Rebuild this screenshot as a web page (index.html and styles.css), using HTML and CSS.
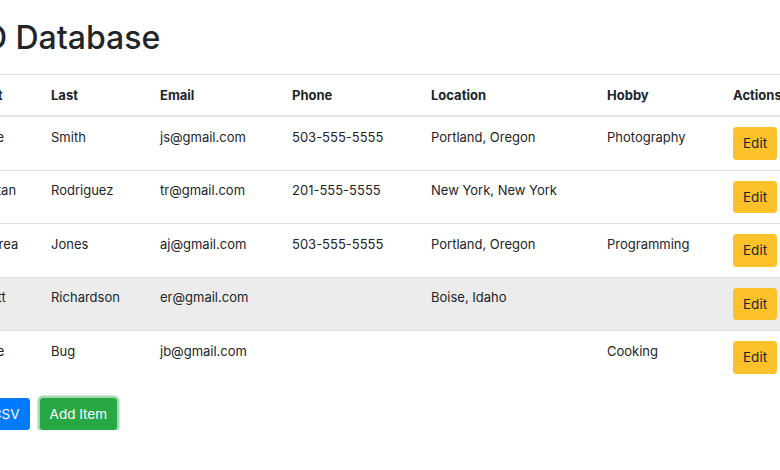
FILE: index.html
```html
<!DOCTYPE html>
<html lang="en">
<head>
  <meta charset="UTF-8" />
  <meta name="viewport" content="width=device-width, initial-scale=1.0"/>
  <title>CRUD Database</title>
  <link rel="stylesheet" href="styles.css">
</head>
<body>
  <div class="container">
    <h1>CRUD Database</h1>

    <table class="table">
      <colgroup>
        <col class="c-first">
        <col class="c-last">
        <col class="c-email">
        <col class="c-phone">
        <col class="c-location">
        <col class="c-hobby">
        <col class="c-actions">
      </colgroup>
      <thead>
        <tr>
          <th>First</th>
          <th>Last</th>
          <th>Email</th>
          <th>Phone</th>
          <th>Location</th>
          <th>Hobby</th>
          <th>Actions</th>
        </tr>
      </thead>
      <tbody>
        <tr>
          <td>Jane</td>
          <td>Smith</td>
          <td>js@gmail.com</td>
          <td>503-555-5555</td>
          <td>Portland, Oregon</td>
          <td>Photography</td>
          <td><button class="btn btn-warning">Edit</button></td>
        </tr>
        <tr>
          <td>Tristan</td>
          <td>Rodriguez</td>
          <td>tr@gmail.com</td>
          <td>201-555-5555</td>
          <td>New York, New York</td>
          <td></td>
          <td><button class="btn btn-warning">Edit</button></td>
        </tr>
        <tr>
          <td>Andrea</td>
          <td>Jones</td>
          <td>aj@gmail.com</td>
          <td>503-555-5555</td>
          <td>Portland, Oregon</td>
          <td>Programming</td>
          <td><button class="btn btn-warning">Edit</button></td>
        </tr>
        <tr class="hover">
          <td>Scott</td>
          <td>Richardson</td>
          <td>er@gmail.com</td>
          <td></td>
          <td>Boise, Idaho</td>
          <td></td>
          <td><button class="btn btn-warning">Edit</button></td>
        </tr>
        <tr>
          <td>June</td>
          <td>Bug</td>
          <td>jb@gmail.com</td>
          <td></td>
          <td></td>
          <td>Cooking</td>
          <td><button class="btn btn-warning">Edit</button></td>
        </tr>
      </tbody>
    </table>

    <div class="actions">
      <button class="btn btn-primary">Download CSV</button>
      <button class="btn btn-success focus">Add Item</button>
    </div>
  </div>
</body>
</html>
```

FILE: styles.css
```css
body {
  margin: 0;
  font-family: Inter, "Open Sans", sans-serif;
  font-size: 13px;
  line-height: 1.5;
  color: #212529;
  background: #fff;
}
.container {
  margin-left: -36px;
  padding-top: 18px;
}
h1 {
  margin: 0 0 16px -48px;
  font-size: 32px;
  font-weight: 500;
  line-height: 1.25;
}
.table {
  border-collapse: collapse;
  table-layout: fixed;
  width: 900px;
}
.c-first { width: 77px; }
.c-last { width: 109px; }
.c-email { width: 132px; }
.c-phone { width: 139px; }
.c-location { width: 176px; }
.c-hobby { width: 126px; }
.c-actions { width: 141px; }
.table th,
.table td {
  padding: 10.5px 10px 10.25px;
  text-align: left;
  vertical-align: top;
  border-top: 1px solid #dee2e6;
  white-space: nowrap;
}
.table th {
  font-weight: 700;
  border-bottom: 2px solid #dee2e6;
}
.table td .btn {
  margin-top: -0.5px;
}
.table tbody tr:first-child td {
  border-top: none;
}
.table tr.hover td {
  background: #ececec;
}
.btn {
  font-family: inherit;
  font-size: 13.5px;
  line-height: 1.5;
  padding: 5px 9px;
  border: 1px solid transparent;
  border-radius: 3px;
  cursor: pointer;
}
.btn-warning {
  background: #fdc12a;
  border-color: #fdc12a;
  color: #212529;
}
.btn-primary {
  background: #007bff;
  border-color: #007bff;
  color: #fff;
}
.btn-success {
  background: #28a745;
  border-color: #28a745;
  color: #fff;
}
.btn.focus {
  box-shadow: 0 0 0 2.5px rgba(72, 180, 97, 0.5);
}
.actions {
  display: flex;
  gap: 10px;
  margin-top: 14px;
  margin-left: -50px;
}
```
